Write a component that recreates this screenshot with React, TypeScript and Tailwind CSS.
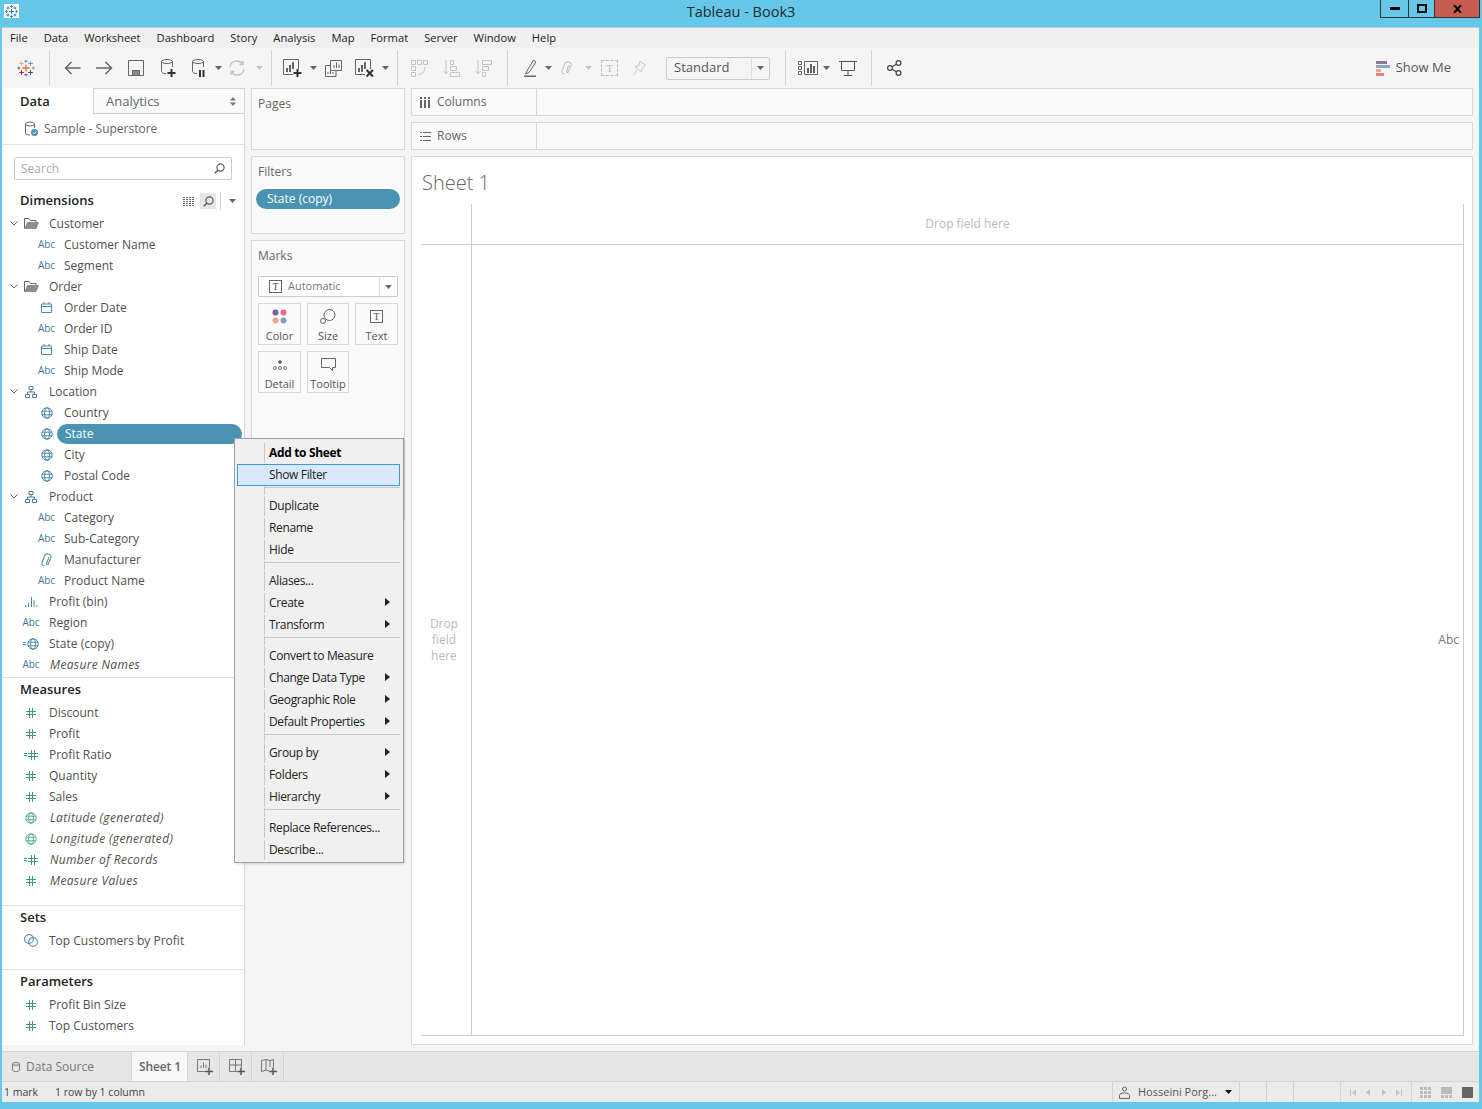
import type { ReactNode } from "react";

const font = { fontFamily: '"Open Sans", "Noto Sans", sans-serif' };

type IconKind =
  | "abc"
  | "cal"
  | "globe"
  | "globeCalc"
  | "folder"
  | "hier"
  | "clip"
  | "bin"
  | "num"
  | "numCalc"
  | "globeGreen"
  | "set";

interface Field {
  name: string;
  icon: IconKind;
  level: "group" | "child" | "top";
  italic?: boolean;
  selected?: boolean;
}

const dimensions: Field[] = [
  { name: "Customer", icon: "folder", level: "group" },
  { name: "Customer Name", icon: "abc", level: "child" },
  { name: "Segment", icon: "abc", level: "child" },
  { name: "Order", icon: "folder", level: "group" },
  { name: "Order Date", icon: "cal", level: "child" },
  { name: "Order ID", icon: "abc", level: "child" },
  { name: "Ship Date", icon: "cal", level: "child" },
  { name: "Ship Mode", icon: "abc", level: "child" },
  { name: "Location", icon: "hier", level: "group" },
  { name: "Country", icon: "globe", level: "child" },
  { name: "State", icon: "globe", level: "child", selected: true },
  { name: "City", icon: "globe", level: "child" },
  { name: "Postal Code", icon: "globe", level: "child" },
  { name: "Product", icon: "hier", level: "group" },
  { name: "Category", icon: "abc", level: "child" },
  { name: "Sub-Category", icon: "abc", level: "child" },
  { name: "Manufacturer", icon: "clip", level: "child" },
  { name: "Product Name", icon: "abc", level: "child" },
  { name: "Profit (bin)", icon: "bin", level: "top" },
  { name: "Region", icon: "abc", level: "top" },
  { name: "State (copy)", icon: "globeCalc", level: "top" },
  { name: "Measure Names", icon: "abc", level: "top", italic: true },
];

const measures: Field[] = [
  { name: "Discount", icon: "num", level: "top" },
  { name: "Profit", icon: "num", level: "top" },
  { name: "Profit Ratio", icon: "numCalc", level: "top" },
  { name: "Quantity", icon: "num", level: "top" },
  { name: "Sales", icon: "num", level: "top" },
  { name: "Latitude (generated)", icon: "globeGreen", level: "top", italic: true },
  { name: "Longitude (generated)", icon: "globeGreen", level: "top", italic: true },
  { name: "Number of Records", icon: "numCalc", level: "top", italic: true },
  { name: "Measure Values", icon: "num", level: "top", italic: true },
];

const menuGroups: { label: string; arrow?: boolean; bold?: boolean; hot?: boolean }[][] = [
  [{ label: "Add to Sheet", bold: true }, { label: "Show Filter", hot: true }],
  [{ label: "Duplicate" }, { label: "Rename" }, { label: "Hide" }],
  [{ label: "Aliases..." }, { label: "Create", arrow: true }, { label: "Transform", arrow: true }],
  [
    { label: "Convert to Measure" },
    { label: "Change Data Type", arrow: true },
    { label: "Geographic Role", arrow: true },
    { label: "Default Properties", arrow: true },
  ],
  [{ label: "Group by", arrow: true }, { label: "Folders", arrow: true }, { label: "Hierarchy", arrow: true }],
  [{ label: "Replace References..." }, { label: "Describe..." }],
];

function Cross({ x, y, r, c, w = 1.4 }: { x: number; y: number; r: number; c: string; w?: number }) {
  return <path d={`M${x - r} ${y}H${x + r}M${x} ${y - r}V${y + r}`} stroke={c} strokeWidth={w} fill="none" />;
}

function TableauLogo() {
  return (
    <svg width="18" height="18" viewBox="0 0 20 20">
      <Cross x={10} y={10} r={4} c="#e8762d" w={1.4} />
      <Cross x={10} y={2.5} r={1.8} c="#7d9fb0" />
      <Cross x={10} y={17.5} r={1.8} c="#6f7aa0" />
      <Cross x={2} y={10} r={1.8} c="#6f7aa0" w={1.2} />
      <Cross x={18} y={10} r={1.8} c="#7d9fb0" w={1.2} />
      <Cross x={5} y={5} r={2.6} c="#eab26a" w={1.2} />
      <Cross x={15} y={5} r={2.6} c="#6b98ad" w={1.2} />
      <Cross x={5} y={15} r={2.6} c="#c72035" w={1.2} />
      <Cross x={15} y={15} r={2.6} c="#2a4f85" w={1.2} />
    </svg>
  );
}

function Caret({ c = "#666", className = "" }: { c?: string; className?: string }) {
  return (
    <svg className={className} width="7" height="4" viewBox="0 0 7 4">
      <path d="M0 0H7L3.5 4Z" fill={c} />
    </svg>
  );
}

function Globe({ c = "#4a8aa8" }: { c?: string }) {
  return (
    <svg width="12" height="12" viewBox="0 0 12 12" fill="none" stroke={c} strokeWidth="1">
      <circle cx="6" cy="6" r="5.2" />
      <ellipse cx="6" cy="6" rx="2.4" ry="5.2" />
      <path d="M.8 4.2H11.2M.8 7.8H11.2" />
    </svg>
  );
}

function Hash() {
  return (
    <svg width="10" height="10" viewBox="0 0 10 10" fill="none" stroke="#3f9a75" strokeWidth="1">
      <path d="M3.5 0V10M6.5 0V10M0 3.5H10M0 6.5H10" />
    </svg>
  );
}

function FieldIcon({ kind }: { kind: IconKind }) {
  switch (kind) {
    case "abc":
      return <span className="text-[10px] font-medium text-[#3f7a99]">Abc</span>;
    case "cal":
      return (
        <svg width="11" height="11" viewBox="0 0 11 11" fill="none" stroke="#4a8aa8">
          <path d="M.5 2H10.5V10.5H.5ZM.5 4.5H10.5M3 0V2M8 0V2" />
        </svg>
      );
    case "globe":
      return <Globe />;
    case "globeCalc":
      return (
        <span className="flex items-center gap-px">
          <span className="h-[3px] w-[3px] border-y border-[#4a8aa8]" />
          <Globe />
        </span>
      );
    case "globeGreen":
      return <Globe c="#5bb08c" />;
    case "folder":
      return (
        <svg width="15" height="11" viewBox="0 0 15 11">
          <path d="M.5 10.5V.5H5L6.5 2.5H12V4" fill="none" stroke="#666" />
          <path d="M1 10.5L3.5 4.5H14.5L12 10.5Z" fill="#8a8f94" stroke="#666" strokeWidth=".6" />
        </svg>
      );
    case "hier":
      return (
        <svg width="12" height="12" viewBox="0 0 12 12" fill="none" stroke="#4a7f9c">
          <path d="M4 .5H8V3.5H4ZM.5 8.5H4.5V11.5H.5ZM7.5 8.5H11.5V11.5H7.5ZM6 3.5V6M2.5 8.5V6H9.5V8.5" />
        </svg>
      );
    case "clip":
      return <Clip c="#5b92ad" />;
    case "bin":
      return (
        <svg width="15" height="10" viewBox="0 0 15 10" fill="#4a8aa8">
          <path d="M1 8h1v2H1ZM4 6h1v4H4ZM7 0h1v10H7ZM9.500 3h1v7h-1ZM12.500 8h1v2h-1Z" />
        </svg>
      );
    case "num":
      return <Hash />;
    case "numCalc":
      return (
        <span className="flex items-center gap-px">
          <span className="h-[3px] w-[3px] border-y border-[#3f9a75]" />
          <Hash />
        </span>
      );
    case "set":
      return (
        <svg width="14" height="13" viewBox="0 0 14 13" fill="none" stroke="#5b8fac" strokeWidth="1.1">
          <circle cx="5" cy="5" r="4.4" />
          <circle cx="9" cy="8" r="4.4" />
        </svg>
      );
  }
}

function Clip({ c }: { c: string }) {
  return (
    <svg width="12" height="14" viewBox="0 0 12 14" fill="none" stroke={c} strokeWidth="1.1">
      <path d="M3.500 12.500C2 13 .6 12 1 10L3.500 3C4 1.500 5.500.5 7.500 1C9.500 1.500 10.500 3 10 4.500L7.500 10.500C7 12 5.500 12 5.500 10.500L8 4" />
    </svg>
  );
}

function FieldRow({ field }: { field: Field }) {
  const label = (
    <span
      className={`whitespace-nowrap ${field.italic ? "pl-[1px] italic tracking-[0.35px]" : ""} ${field.selected ? "text-white" : "text-[#505050]"}`}
    >
      {field.name}
    </span>
  );
  if (field.level === "child") {
    return (
      <div className="flex h-[21px] items-center pl-[36px]">
        <span className="flex w-[17px] justify-center">
          <FieldIcon kind={field.icon} />
        </span>
        {field.selected ? (
          <span className="ml-[2px] flex h-[20px] w-[185px] items-center rounded-full bg-[#4a93b3] pl-[8px]">{label}</span>
        ) : (
          <span className="ml-[9px]">{label}</span>
        )}
      </div>
    );
  }
  return (
    <div className="flex h-[21px] items-center pl-[6px]">
      <span className="flex w-[12px] justify-center">
        {field.level === "group" && (
          <svg width="8" height="5" viewBox="0 0 8 5" fill="none" stroke="#666">
            <path d="M.5.5L4 4L7.500.5" />
          </svg>
        )}
      </span>
      <span className="ml-[3px] flex w-[16px] justify-center">
        <FieldIcon kind={field.icon} />
      </span>
      <span className="ml-[10px]">{label}</span>
    </div>
  );
}

function SectionHead({ children }: { children: ReactNode }) {
  return <div className="flex h-[23px] items-center pl-[18px] pt-[1px] text-[13px] font-semibold text-[#222]">{children}</div>;
}

function DataPane() {
  return (
    <aside className="flex w-[243px] flex-col border-r border-[#d4d4d4] bg-white text-[12px]">
      <div className="flex h-[26px] shrink-0">
        <div className="flex w-[91px] items-center pl-[18px] pt-[1px] text-[13px] font-semibold text-[#222]">Data</div>
        <div className="flex flex-1 items-center justify-between border border-r-0 border-[#d4d4d4] bg-[#fafafa] pl-[12px] pr-[8px] pt-[1px] text-[13px] text-[#666]">
          Analytics
          <svg width="6" height="9" viewBox="0 0 6 9" fill="#777">
            <path d="M0 3.500L3 0L6 3.500ZM0 5.500H6L3 9Z" />
          </svg>
        </div>
      </div>
      <div className="flex h-[31px] shrink-0 items-center border-b border-[#e2e2e2] pl-[22px] text-[#666]">
        <svg width="15" height="16" viewBox="0 0 15 16" fill="none">
          <ellipse cx="6" cy="3" rx="4.500" ry="2" stroke="#666" />
          <path d="M1.500 3V12C1.500 13 3 14 6 14M10.500 3V7" stroke="#666" />
          <circle cx="10.500" cy="11.500" r="3.500" fill="#4a8fb5" />
          <path d="M9 11.500L10.200 12.700L12.200 10.500" stroke="#fff" />
        </svg>
        <span className="ml-[5px]">Sample - Superstore</span>
      </div>
      <div className="mx-[12px] mt-[12px] flex h-[23px] shrink-0 items-center justify-between rounded-[2px] border border-[#ccc] pl-[6px] pr-[6px] text-[#aaa]">
        Search
        <MagnifyIcon />
      </div>
      <div className="mt-[11px] flex h-[20px] shrink-0 items-center pl-[18px] pr-[8px]">
        <span className="flex-1 text-[13px] font-semibold text-[#222]">Dimensions</span>
        <svg width="12" height="9" viewBox="0 0 12 9" stroke="#666" strokeWidth="1" strokeDasharray="2 1">
          <path d="M0 .5H12M0 2.500H12M0 4.500H12M0 6.500H12M0 8.500H12" />
        </svg>
        <span className="ml-[5px] flex h-[16px] w-[16px] items-center justify-center bg-[#e6e6e6]">
          <MagnifyIcon />
        </span>
        <span className="ml-[4px] h-[18px] w-px bg-[#d4d4d4]" />
        <Caret className="ml-[8px]" />
      </div>
      <div className="mt-[2px]">
        {dimensions.map((f) => (
          <FieldRow key={f.name} field={f} />
        ))}
      </div>
      <div className="mt-[2px] border-t border-[#e2e2e2]">
        <SectionHead>Measures</SectionHead>
        <div className="mt-[1px]">
          {measures.map((f) => (
            <FieldRow key={f.name} field={f} />
          ))}
        </div>
      </div>
      <div className="mt-[14px] border-t border-[#e2e2e2]">
        <SectionHead>Sets</SectionHead>
        <div className="mt-[1px]">
          <FieldRow field={{ name: "Top Customers by Profit", icon: "set", level: "top" }} />
        </div>
      </div>
      <div className="mt-[18px] border-t border-[#e2e2e2]">
        <SectionHead>Parameters</SectionHead>
        <div className="mt-[1px]">
          <FieldRow field={{ name: "Profit Bin Size", icon: "num", level: "top" }} />
          <FieldRow field={{ name: "Top Customers", icon: "num", level: "top" }} />
        </div>
      </div>
    </aside>
  );
}

function MagnifyIcon() {
  return (
    <svg width="11" height="11" viewBox="0 0 11 11" fill="none" stroke="#555" strokeWidth="1.1">
      <circle cx="6.500" cy="4.500" r="3.600" />
      <path d="M4 7L.8 10.200" strokeWidth="1.500" />
    </svg>
  );
}

function TFrame() {
  return (
    <span className="flex h-[13px] w-[13px] items-center justify-center border border-[#666] font-['Liberation_Serif'] text-[10px] leading-none text-[#555]">
      T
    </span>
  );
}

function MarkBtn({ label, wide, children }: { label: string; wide?: boolean; children: ReactNode }) {
  return (
    <div
      className={`flex h-[42px] flex-col items-center border border-[#d8d8d8] bg-[#fafafa] text-[11px] text-[#555] ${wide ? "w-[43px]" : "w-[42px]"}`}
    >
      <span className="flex h-[25px] items-center justify-center">{children}</span>
      <span className="leading-[14px]">{label}</span>
    </div>
  );
}

function CardsPane() {
  return (
    <div className="flex w-[160px] shrink-0 flex-col gap-[6px] pl-[6px] text-[12px]">
      <section className="h-[62px] border border-[#d8d8d8] bg-[#fafafa] pl-[6px] pt-[6px] text-[#666]">Pages</section>
      <section className="h-[78px] border border-[#d8d8d8] bg-[#fafafa] pl-[6px] pt-[6px] text-[#666]">
        Filters
        <div className="-ml-[2px] mt-[8px] flex h-[20px] w-[144px] items-center rounded-full bg-[#4a93b3] pl-[11px] text-white">
          State (copy)
        </div>
      </section>
      <section className="h-[280px] border border-[#d8d8d8] bg-[#fafafa] px-[6px] pt-[6px] text-[#666]">
        Marks
        <div className="mt-[11px] flex h-[21px] w-[140px] items-center rounded-[1px] border border-[#ccc] bg-white text-[11px] text-[#777]">
          <span className="ml-[10px] mr-[6px]">
            <TFrame />
          </span>
          <span className="flex-1">Automatic</span>
          <span className="flex h-full w-[18px] items-center justify-center border-l border-[#ddd]">
            <Caret />
          </span>
        </div>
        <div className="mt-[6px] flex gap-[6px]">
          <MarkBtn label="Color" wide>
            <svg width="15" height="15" viewBox="0 0 15 15">
              <circle cx="3.500" cy="3.500" r="3" fill="#7a5f9a" />
              <circle cx="11.500" cy="3.500" r="3" fill="#ef6a7d" />
              <circle cx="3.500" cy="11.500" r="3" fill="#f2a67a" />
              <circle cx="11.500" cy="11.500" r="3" fill="#7b9fcb" />
            </svg>
          </MarkBtn>
          <MarkBtn label="Size">
            <svg width="16" height="15" viewBox="0 0 16 15" fill="none" stroke="#666">
              <circle cx="9.500" cy="6" r="5.500" />
              <circle cx="3" cy="12" r="2.500" fill="#fafafa" />
            </svg>
          </MarkBtn>
          <MarkBtn label="Text" wide>
            <TFrame />
          </MarkBtn>
        </div>
        <div className="mt-[6px] flex gap-[6px]">
          <MarkBtn label="Detail" wide>
            <svg width="14" height="10" viewBox="0 0 14 10" fill="none" stroke="#666" strokeWidth=".9">
              <circle cx="7" cy="2" r="1.800" fill="#555" stroke="none" />
              <circle cx="2" cy="8" r="1.500" />
              <circle cx="7" cy="8" r="1.500" />
              <circle cx="12" cy="8" r="1.500" />
            </svg>
          </MarkBtn>
          <MarkBtn label="Tooltip">
            <svg width="15" height="13" viewBox="0 0 15 13" fill="none" stroke="#666">
              <path d="M.5.500H14.500V9.500H11.500V12.500L8.500 9.500H.5Z" />
            </svg>
          </MarkBtn>
        </div>
      </section>
    </div>
  );
}

function Shelf({ label, icon }: { label: string; icon: ReactNode }) {
  return (
    <div className="flex h-[28px] border border-[#d8d8d8] bg-[#fafafa] text-[12px] text-[#666]">
      <div className="flex w-[125px] items-center border-r border-[#d8d8d8] pl-[7px]">
        <span className="flex w-[12px] justify-center">{icon}</span>
        <span className="ml-[6px]">{label}</span>
      </div>
    </div>
  );
}

function SheetPane() {
  return (
    <div className="ml-[6px] mr-[6px] flex min-w-0 flex-1 flex-col gap-[6px]">
      <Shelf
        label="Columns"
        icon={
          <svg width="10" height="11" viewBox="0 0 10 11" fill="#666">
            <path d="M0 0h2v2H0ZM0 3h2v8H0ZM4 0h2v2H4ZM4 3h2v8H4ZM8 0h2v2H8ZM8 3h2v8H8Z" />
          </svg>
        }
      />
      <Shelf
        label="Rows"
        icon={
          <svg width="11" height="9" viewBox="0 0 11 9" fill="#666">
            <path d="M0 0h2v1H0ZM3 0h8v1H3ZM0 4h2v1H0ZM3 4h8v1H3ZM0 8h2v1H0ZM3 8h8v1H3Z" />
          </svg>
        }
      />
      <section className="flex flex-1 flex-col border border-[#d8d8d8] bg-white pb-[8px] pl-[9px] pr-[8px]">
        <h1 className="flex h-[47px] shrink-0 items-center pl-[1px] pt-[4px] text-[20px] font-light text-[#666]">Sheet 1</h1>
        <div className="grid flex-1 grid-cols-[51px_1fr] grid-rows-[41px_1fr] border-b border-r border-[#ccc] text-[12px] text-[#bbb]">
          <div className="border-b border-r border-[#ccc]" />
          <div className="flex items-center justify-center border-b border-[#ccc]">Drop field here</div>
          <div className="flex items-center justify-center border-r border-[#ccc] pr-[4px] text-center leading-[16px]">
            Drop
            <br />
            field
            <br />
            here
          </div>
          <div className="flex items-center justify-end pr-[4px] text-[#777]">Abc</div>
        </div>
      </section>
    </div>
  );
}

function Sep({ className }: { className: string }) {
  return <span className={`h-[36px] w-px shrink-0 bg-[#d4d4d4] ${className}`} />;
}

const dis = "#c4c4c4";

function Toolbar() {
  return (
    <div className="flex h-[40px] shrink-0 items-center bg-[#f5f5f5] text-[#555]">
      <span className="ml-[15px]">
        <TableauLogo />
      </span>
      <Sep className="ml-[14px]" />
      <svg className="ml-[14px]" width="17" height="14" viewBox="0 0 17 14" fill="none" stroke="#666" strokeWidth="1.500">
        <path d="M16.500 7H1.500M7.500 1L1.500 7L7.500 13" />
      </svg>
      <svg className="ml-[15px]" width="17" height="14" viewBox="0 0 17 14" fill="none" stroke="#666" strokeWidth="1.500">
        <path d="M0 7H15.500M9.500 1L15.500 7L9.500 13" />
      </svg>
      <svg className="ml-[15px]" width="16" height="16" viewBox="0 0 16 16" fill="none" stroke="#666">
        <path d="M.5.500H15.500V15.500H.5Z" />
        <path d="M4.500 15V10.500H11.500V15" fill="#888" />
      </svg>
      <svg className="ml-[17px]" width="15" height="18" viewBox="0 0 15 18" fill="none" stroke="#666">
        <ellipse cx="6" cy="2.500" rx="5.500" ry="2" />
        <path d="M.5 2.500V12.500C.5 13.500 2 14.500 5 14.500M11.500 2.500V8" />
        <path d="M10.500 10V18M6.500 14H14.500" stroke="#333" strokeWidth="2" />
      </svg>
      <svg className="ml-[16px]" width="13" height="18" viewBox="0 0 13 18" fill="none" stroke="#666">
        <ellipse cx="6" cy="2.500" rx="5.500" ry="2" />
        <path d="M.5 2.500V12.500C.5 13.500 2 14.500 5 14.500M11.500 2.500V8" />
        <path d="M8 11V18M11.500 11V18" stroke="#333" strokeWidth="2" />
      </svg>
      <Caret className="ml-[10px]" />
      <svg className="ml-[7px]" width="16" height="16" viewBox="0 0 16 16" fill="none" stroke={dis} strokeWidth="1.500">
        <path d="M1 7C1.500 3.500 4.500 1 8 1C10.500 1 12.500 2.500 13.500 4M15 9C14.500 12.500 11.500 15 8 15C5.500 15 3.500 13.500 2.500 12" />
        <path d="M14 1V4.500H10.500M2 15V11.500H5.500" />
      </svg>
      <Caret className="ml-[11px]" c={dis} />
      <Sep className="ml-[8px]" />
      <svg className="ml-[11px]" width="19" height="18" viewBox="0 0 19 18" fill="none" stroke="#666">
        <path d="M.5.500H15.500V10M.5.500V15.500H10" />
        <path d="M4 9V13M7 6V13M10 3V10" strokeWidth="2" />
        <path d="M14.500 10V18M10.500 14H18.500" stroke="#333" strokeWidth="2" />
      </svg>
      <Caret className="ml-[8px]" />
      <svg className="ml-[8px]" width="17" height="17" viewBox="0 0 17 17" fill="none" stroke="#666">
        <path d="M5.500.5H16.500V10.500H5.500Z" />
        <path d="M5 5.500H.5V16.500H11V11" />
        <path d="M9 8V5M11.500 8V2.500M14 8V4.500M3 14V12M5.500 14V10.500M8 14V12" />
      </svg>
      <svg className="ml-[13px]" width="19" height="18" viewBox="0 0 19 18" fill="none" stroke="#666">
        <path d="M.5.500H15.500V10M.5.500V15.500H10" />
        <path d="M4 9V13M7 6V13M10 3V10" strokeWidth="2" />
        <path d="M11.500 11L18 17.500M18 11L11.500 17.500" stroke="#333" strokeWidth="2" />
      </svg>
      <Caret className="ml-[8px]" />
      <Sep className="ml-[8px]" />
      <svg className="ml-[13px]" width="17" height="17" viewBox="0 0 17 17" fill="none" stroke={dis}>
        <path d="M.5.500H4.500V4.500H.5ZM6.500.5H10.500V4.500H6.500ZM12.500.5H16.500V4.500H12.500ZM.5 6.500H4.500V10.500H.5ZM.5 12.500H4.500V16.500H.5ZM14 7C14 12 11 14.500 7 14.500" />
      </svg>
      <svg className="ml-[15px]" width="17" height="17" viewBox="0 0 17 17" fill="none" stroke={dis}>
        <path d="M3 0V14M.5 11L3 14L5.500 11M7.500.5H10.500V4.500H7.500ZM7.500 6.500H13.500V10.500H7.500ZM7.500 12.500H16.500V16.500H7.500Z" />
      </svg>
      <svg className="ml-[15px]" width="17" height="17" viewBox="0 0 17 17" fill="none" stroke={dis}>
        <path d="M3 0V14M.5 11L3 14L5.500 11M7.500.5H16.500V4.500H7.500ZM7.500 6.500H13.500V10.500H7.500ZM7.500 12.500H10.500V16.500H7.500Z" />
      </svg>
      <Sep className="ml-[15px]" />
      <svg className="ml-[16px]" width="13" height="18" viewBox="0 0 13 18" fill="none" stroke="#666">
        <path d="M3 12L1.500 15L5 13.500L12 3L9.500 1Z" />
        <path d="M0 17.500H12" strokeWidth="2" />
      </svg>
      <Caret className="ml-[8px]" />
      <span className="ml-[9px]">
        <Clip c={dis} />
      </span>
      <Caret className="ml-[12px]" c={dis} />
      <span className="ml-[9px] flex h-[16px] w-[17px] items-center justify-center border border-dashed border-[#bbb] font-['Liberation_Serif'] text-[11px] text-[#bbb]">
        T
      </span>
      <svg className="ml-[15px]" width="13" height="15" viewBox="0 0 13 15" fill="none" stroke={dis}>
        <path d="M7 .5L12.500 4L9 7.500L8.500 11L2 5.500L5.500 5ZM4 9L.5 14" />
      </svg>
      <div className="ml-[20px] flex h-[23px] w-[104px] shrink-0 items-center rounded-[2px] border border-[#ccc] text-[13px]">
        <span className="flex-1 pl-[7px]">Standard</span>
        <span className="flex h-full w-[18px] items-center justify-center border-l border-[#ddd]">
          <Caret />
        </span>
      </div>
      <Sep className="ml-[15px]" />
      <svg className="ml-[12px]" width="20" height="14" viewBox="0 0 20 14" fill="none" stroke="#666">
        <path d="M.5.500H3.500V3.500H.5ZM.5 5.500H3.500V8.500H.5ZM.5 10.500H3.500V13.500H.5ZM6.500.5H19.500V13.500H6.500Z" />
        <path d="M10 7V12M13 3V12M16 5V12" strokeWidth="2" />
      </svg>
      <Caret className="ml-[5px]" />
      <svg className="ml-[9px]" width="18" height="16" viewBox="0 0 18 16" fill="none" stroke="#555">
        <path d="M0 1.500H18M2.500 1.500V10.500H15.500V1.500M9 10.500V15M5 15.500H13" />
      </svg>
      <Sep className="ml-[14px]" />
      <svg className="ml-[15px]" width="15" height="16" viewBox="0 0 15 16" fill="none" stroke="#444" strokeWidth="1.200">
        <circle cx="3" cy="8" r="2.400" />
        <circle cx="11.500" cy="3" r="2.400" />
        <circle cx="11.500" cy="13" r="2.400" />
        <path d="M5 6.800L9.500 4.200M5 9.200L9.500 11.800" />
      </svg>
      <div className="ml-auto mr-[28px] flex items-center text-[13px] text-[#555]">
        <svg width="14" height="15" viewBox="0 0 14 15">
          <path d="M0 0H11V3H0Z" fill="#8e7b9c" />
          <path d="M0 4H14V7H0Z" fill="#8ba4cc" />
          <path d="M0 8H5V11H0Z" fill="#f2a67a" />
          <path d="M0 12H8V15H0Z" fill="#f27a8e" />
        </svg>
        <span className="ml-[6px]">Show Me</span>
      </div>
    </div>
  );
}

function ContextMenu() {
  return (
    <div
      className="absolute left-[234px] top-[438px] w-[170px] border border-[#a0a0a0] bg-[#f0f0f0] pb-[1px] pl-[2px] pr-[3px] pt-[3px] text-[12px] text-[#222] shadow-[1px_1px_2px_rgba(0,0,0,0.15)]"
      style={font}
    >
      {menuGroups.map((group, gi) => (
        <div key={gi}>
          {gi > 0 && (
            <div className="flex h-[9px] pl-[27px]">
              <span className="w-px bg-[#c8c8c8]" />
              <span className="mt-[1px] h-px flex-1 bg-[#c8c8c8]" />
            </div>
          )}
          {group.map((item) => (
            <div
              key={item.label}
              className={`flex h-[22px] items-center border ${item.hot ? "border-[#3f9ad0] bg-[#d9e9fb]" : "border-transparent"}`}
            >
              <span className={`ml-[26px] h-full w-px ${item.hot ? "" : "bg-[#c8c8c8]"}`} />
              <span className={`ml-[4px] flex-1 whitespace-nowrap tracking-[-0.35px] ${item.bold ? "font-bold text-black" : ""}`}>
                {item.label}
              </span>
              {item.arrow && (
                <svg className="mb-[2px] mr-[9px]" width="5" height="8" viewBox="0 0 5 8">
                  <path d="M0 0L5 4L0 8Z" fill="#222" />
                </svg>
              )}
            </div>
          ))}
        </div>
      ))}
    </div>
  );
}

function TabIcon({ children }: { children: ReactNode }) {
  return <div className="flex w-[32px] items-center justify-center border-r border-[#d4d4d4] pl-[3px]">{children}</div>;
}

const plus = <path d="M12 8.500V16M8.500 12.500H16" stroke="#555" strokeWidth="1.500" />;

function TabBar() {
  return (
    <div className="flex h-[30px] shrink-0 border-t border-[#d4d4d4] bg-[#e6e6e6] text-[12px] text-[#777]">
      <div className="flex w-[130px] items-center border-r border-[#d4d4d4] pl-[10px]">
        <svg width="8" height="10" viewBox="0 0 8 10" fill="none" stroke="#777">
          <path d="M.5 2V8C.5 9 2 9.500 4 9.500C6 9.500 7.500 9 7.500 8V2C7.500 1 6 .5 4 .5C2 .5.5 1 .5 2ZM.5 2.500C1.500 3.500 6.500 3.500 7.500 2.500" />
        </svg>
        <span className="ml-[6px]">Data Source</span>
      </div>
      <div className="flex w-[56px] items-center justify-center border-r border-[#d4d4d4] bg-[#f8f8f8] pl-[1px] font-semibold tracking-[-0.1px] text-[#666]">
        Sheet 1
      </div>
      <TabIcon>
        <svg width="16" height="16" viewBox="0 0 16 16" fill="none" stroke="#777">
          <path d="M10 12.500H.5V.5H12.500V8M4 9V6.500M6.500 9V3.500M9 9V5.500" />
          {plus}
        </svg>
      </TabIcon>
      <TabIcon>
        <svg width="16" height="16" viewBox="0 0 16 16" fill="none" stroke="#777">
          <path d="M8 12.500H.5V.5H12.500V8M.5 6H12.500M6.500.5V12.500" />
          {plus}
        </svg>
      </TabIcon>
      <TabIcon>
        <svg width="16" height="16" viewBox="0 0 16 16" fill="none" stroke="#777">
          <path d="M9 12.500L5 11L.5 12.500V1.500L5 .5L9 1.500L12.500.5V8M5 .5V11M9 1.500V8" />
          {plus}
        </svg>
      </TabIcon>
    </div>
  );
}

function StatusBar() {
  return (
    <div className="flex h-[21px] shrink-0 items-center border-t border-[#d4d4d4] bg-[#ebebeb] text-[10.5px] text-[#444]">
      <span className="ml-[2px] w-[51px] pt-[1px]">1 mark</span>
      <span className="flex-1 pt-[1px]">1 row by 1 column</span>
      <div className="flex h-full w-[127px] items-center border-l border-[#d4d4d4] pl-[6px]">
        <svg width="11" height="13" viewBox="0 0 11 13" fill="none" stroke="#666">
          <circle cx="5.500" cy="3" r="2" />
          <path d="M.5 12.500V9.500C.5 8 2 7 5.500 7C9 7 10.500 8 10.500 9.500V12.500Z" />
        </svg>
        <span className="ml-[8px] flex-1 whitespace-nowrap text-[11px] text-[#555]">Hosseini Porg...</span>
        <svg className="mr-[7px]" width="7" height="4" viewBox="0 0 7 4">
          <path d="M0 0H7L3.500 4Z" fill="#111" />
        </svg>
      </div>
      <span className="h-full w-[27px] border-l border-[#d4d4d4]" />
      <span className="h-full w-[27px] border-l border-[#d4d4d4]" />
      <span className="h-full w-[47px] border-l border-[#d4d4d4]" />
      <div className="flex h-full w-[71px] items-center justify-around border-l border-[#d4d4d4] px-[4px]" aria-hidden>
        {["M0 0H1V7H0ZM6 0V7L2 3.500Z", "M5 0V7L1 3.500Z", "M1 0V7L5 3.500Z", "M0 0V7L4 3.500ZM5 0H6V7H5Z"].map((d) => (
          <svg key={d} width="6" height="7" viewBox="0 0 6 7">
            <path d={d} fill="#c4c4c4" />
          </svg>
        ))}
      </div>
      <div className="flex h-full w-[68px] items-center border-l border-[#d4d4d4] pl-[8px]">
        <svg width="11" height="11" viewBox="0 0 11 11" fill="#bbb">
          <path d="M0 0h3v3H0ZM4 0h3v3H4ZM8 0h3v3H8ZM0 4h3v3H0ZM4 4h3v3H4ZM8 4h3v3H8ZM0 8h3v3H0ZM4 8h3v3H4ZM8 8h3v3H8Z" />
        </svg>
        <svg className="ml-[10px]" width="11" height="11" viewBox="0 0 11 11" fill="#bbb">
          <path d="M0 0h11v7H0ZM0 8h3v3H0ZM4 8h3v3H4ZM8 8h3v3H8Z" />
        </svg>
        <span className="ml-[10px] h-[11px] w-[11px] bg-[#666]" />
      </div>
    </div>
  );
}

const menuNames = ["File", "Data", "Worksheet", "Dashboard", "Story", "Analysis", "Map", "Format", "Server", "Window", "Help"];

export default function App() {
  return (
    <div className="relative flex h-[1109px] w-[1482px] flex-col overflow-hidden bg-[#66c8e8] text-[12px]" style={font}>
      <header className="grid h-[27px] shrink-0 grid-cols-[1fr_auto_1fr] items-start">
        <div className="ml-[4px] mt-[4px] flex h-[14px] w-[15px] items-center justify-center bg-white">
          <svg width="13" height="13" viewBox="0 0 13 13">
            <Cross x={6.500} y={6.500} r={2.500} c="#2f7fb0" w={1} />
            <Cross x={6.500} y={1.500} r={1.300} c="#2f7fb0" w={1} />
            <Cross x={6.500} y={11.500} r={1.300} c="#2f7fb0" w={1} />
            <Cross x={1.500} y={6.500} r={1.300} c="#2f7fb0" w={1} />
            <Cross x={11.500} y={6.500} r={1.300} c="#2f7fb0" w={1} />
            <Cross x={3} y={3} r={1.500} c="#2f7fb0" w={1} />
            <Cross x={10} y={3} r={1.500} c="#2f7fb0" w={1} />
            <Cross x={3} y={10} r={1.500} c="#2f7fb0" w={1} />
            <Cross x={10} y={10} r={1.500} c="#2f7fb0" w={1} />
          </svg>
        </div>
        <div className="flex h-[23px] items-center justify-center text-[14.5px] text-[#1c2a33]">Tableau - Book3</div>
        <div className="mr-[2px] flex h-[18px] justify-self-end border-x border-b border-[#333]">
          <span className="flex w-[28px] items-center justify-center border-r border-[#333]">
            <span className="h-[3px] w-[10px] bg-black" />
          </span>
          <span className="flex w-[26px] items-center justify-center border-r border-[#333]">
            <span className="h-[9px] w-[10px] border-2 border-black" />
          </span>
          <span className="flex w-[44px] items-center justify-center bg-[#c75c50]">
            <svg width="9" height="8" viewBox="0 0 9 8">
              <path d="M1 0L8 8M8 0L1 8" stroke="#000" strokeWidth="2" />
            </svg>
          </span>
        </div>
      </header>

      <div className="ml-[2px] mr-[3px] flex min-h-0 flex-1 flex-col bg-[#f5f5f5]">
        <nav className="flex h-[21px] shrink-0 items-center gap-[16px] border-t border-[#bcd] bg-[#f0f0f0] pl-[8px] text-[11.2px] text-[#222]">
          {menuNames.map((m) => (
            <span key={m}>{m}</span>
          ))}
        </nav>
        <Toolbar />
        <main className="flex min-h-0 flex-1 pb-[6px]">
          <DataPane />
          <CardsPane />
          <SheetPane />
        </main>
        <TabBar />
        <StatusBar />
      </div>
      <div className="h-[7px] shrink-0" />
      <ContextMenu />
    </div>
  );
}
